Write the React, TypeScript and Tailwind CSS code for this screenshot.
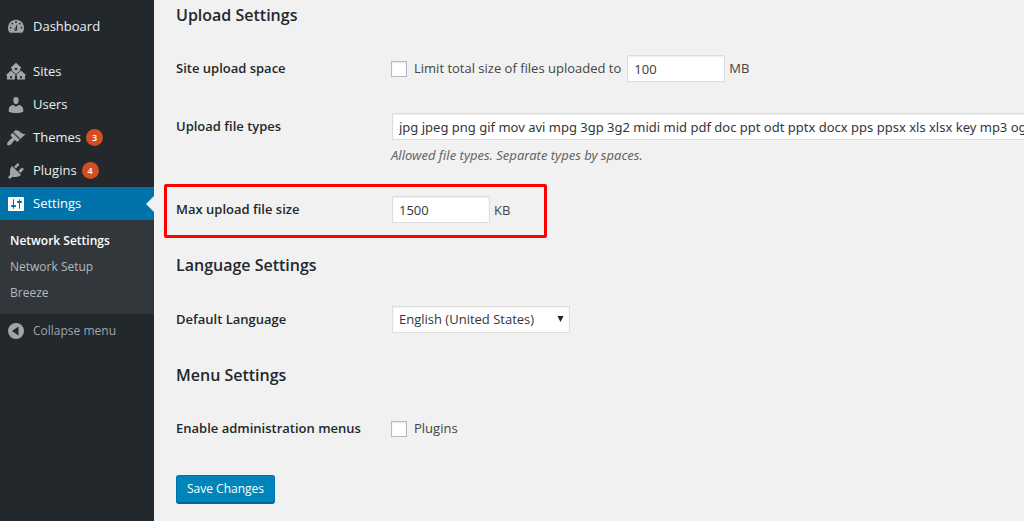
import type { ReactNode } from 'react';

function Icon({ d, children }: { d?: string; children?: ReactNode }) {
  return (
    <svg viewBox="0 0 20 20" className="size-5 shrink-0 fill-current" fillRule="evenodd" aria-hidden="true">
      {d && <path d={d} />}
      {children}
    </svg>
  );
}

const paths = {
  dashboard:
    'M3.76 15.8h12.48c1.1-1.37 1.76-3.11 1.76-5 0-4.42-3.58-8-8-8s-8 3.58-8 8c0 1.89.66 3.63 1.76 5z',
  sites:
    'M10 .8l5.4 4.9-.9 1H14v2L10.1 12h-.2L6 8.700V6.700h-.5l-.9-1zM8.900 6v2h2.200V6zM5 8.400l4.900 4.500-.7.900H9V17.500H1v-3.700H.8L0 12.900zM4 14.300v2h2v-2zM15 8.400l5 4.500-.8.900H19v3.700h-8v-3.700h-.2l-.7-.9zM14 14.300v2h2v-2z',
  users:
    'M10 9.25c-2.27 0-2.73-3.44-2.73-3.44C7 4.02 7.82 2 9.97 2c2.16 0 2.98 2.02 2.71 3.81 0 0-.41 3.44-2.68 3.44zm0 2.57L12.72 10c2.39 0 4.52 2.33 4.52 4.53v2.49s-3.65 1.13-7.24 1.13c-3.65 0-7.24-1.13-7.24-1.13v-2.49c0-2.25 1.94-4.48 4.47-4.48z',
  themes:
    'M14.48 11.06L7.41 3.99l1.5-1.5c.5-.56 2.3-.47 3.51.32 1.21.8 1.43 1.28 2.91 2.1 1.18.64 2.45 1.26 4.45.85zm-.71.71L6.7 4.7 4.93 6.47c-.39.39-.39 1.02 0 1.41l1.06 1.06c.39.39.39 1.03 0 1.42-.6.6-1.43 1.11-2.21 1.69-.35.26-.7.53-1.01.84C1.43 14.23.4 16.08 1.4 17.07c.99 1 2.84-.03 4.18-1.36.31-.31.58-.66.85-1.02.57-.78 1.08-1.61 1.69-2.21.39-.39 1.02-.39 1.41 0l1.06 1.06c.39.39 1.02.39 1.41 0z',
  plugins:
    'M13.11 4.36L9.87 7.6 8 5.73l3.24-3.24c.35-.34 1.05-.2 1.56.32.52.51.66 1.21.31 1.55zm-8 1.77l.91-1.12 9.01 9.01-1.19.84c-.71.71-2.63 1.16-3.82 1.16H6.14L4.9 17.26c-.59.59-1.54.59-2.12 0-.59-.58-.59-1.53 0-2.12l1.24-1.24v-3.88c0-1.13.4-3.19 1.09-3.89zm7.26 3.97l3.24-3.24c.34-.35 1.04-.21 1.55.31.52.51.66 1.21.31 1.55l-3.24 3.25z',
  settings:
    'M18 16V4c0-.55-.45-1-1-1H3c-.55 0-1 .45-1 1v12c0 .55.45 1 1 1h14c.55 0 1-.45 1-1zM8 11h1c.55 0 1 .45 1 1s-.45 1-1 1H8v1.5c0 .28-.22.5-.5.5s-.5-.22-.5-.5V13H6c-.55 0-1-.45-1-1s.45-1 1-1h1V5.5c0-.28.22-.5.5-.5s.5.22.5.5V11zm5-2h-1c-.55 0-1-.45-1-1s.45-1 1-1h1V5.5c0-.28.22-.5.5-.5s.5.22.5.5V7h1c.55 0 1 .45 1 1s-.45 1-1 1h-1v5.5c0 .28-.22.5-.5.5s-.5-.22-.5-.5V9z',
  collapse: 'M10 2a8 8 0 1 0 0 16 8 8 0 0 0 0-16zM12.5 5.5v9L6 10z',
};

function MenuItem({ icon, label, count }: { icon: ReactNode; label: string; count?: number }) {
  return (
    <a href="#" className="flex h-[33px] items-center gap-[7px] pl-1.5 text-[#eee]">
      <span className="text-[#a0a5aa]">{icon}</span>
      {label}
      {count !== undefined && (
        <span className="-ml-0.5 flex size-[17px] items-center justify-center rounded-full bg-[#d54e21] text-[9px] font-semibold text-white">
          {count}
        </span>
      )}
    </a>
  );
}

function Sidebar() {
  return (
    <nav className="w-[154px] shrink-0 bg-[#23282d] pt-2.5 text-[13px]">
      <MenuItem
        label="Dashboard"
        icon={
          <Icon d={paths.dashboard}>
            <g className="fill-[#23282d]">
              <circle cx="10" cy="5" r=".9" />
              <circle cx="6.2" cy="6.6" r=".9" />
              <circle cx="13.8" cy="6.6" r=".9" />
              <circle cx="4.6" cy="10.6" r=".9" />
              <circle cx="15.4" cy="10.6" r=".9" />
              <path d="M11.2 6.8l-.2 4.700a1.500 1.500 0 1 1-1.700-.5z" />
            </g>
            <circle cx="9.8" cy="12.3" r=".6" />
          </Icon>
        }
      />
      <div className="h-3" />
      <MenuItem label="Sites" icon={<Icon d={paths.sites} />} />
      <MenuItem label="Users" icon={<Icon d={paths.users} />} />
      <MenuItem label="Themes" count={3} icon={<Icon d={paths.themes} />} />
      <MenuItem label="Plugins" count={4} icon={<Icon d={paths.plugins} />} />
      <a
        href="#"
        aria-current="page"
        className="flex h-[33px] items-center justify-between bg-[#0073aa] pl-1.5 text-white"
      >
        <span className="flex items-center gap-[7px]">
          <Icon d={paths.settings} />
          Settings
        </span>
        <span className="border-y-8 border-r-8 border-y-transparent border-r-[#f1f1f1]" />
      </a>
      <div className="flex flex-col bg-[#32373c] px-2.5 py-2 text-[12px] leading-[26px] text-[#b4b9be]">
        <a href="#" className="font-semibold text-white">Network Settings</a>
        <a href="#">Network Setup</a>
        <a href="#">Breeze</a>
      </div>
      <button type="button" className="flex h-[33px] items-center gap-[7px] pl-1.5 text-[12px] text-[#a0a5aa]">
        <Icon d={paths.collapse} />
        Collapse menu
      </button>
    </nav>
  );
}

const field = 'h-[27px] border border-[#ddd] bg-white px-1.5 text-[13px] text-[#32373c] shadow-[inset_0_1px_2px_rgba(0,0,0,0.07)]';
const checkbox = 'size-4 shrink-0 appearance-none border border-[#b4b9be] bg-white shadow-[inset_0_1px_2px_rgba(0,0,0,0.1)]';

function Heading({ children }: { children: ReactNode }) {
  return <h2 className="text-[16px] leading-6 font-semibold text-[#23282d]">{children}</h2>;
}

function Row({ label, htmlFor, children }: { label: string; htmlFor: string; children: ReactNode }) {
  return (
    <div className="flex items-start">
      <label htmlFor={htmlFor} className="w-[215px] shrink-0 text-[13px] leading-[27px] font-semibold text-[#23282d]">
        {label}
      </label>
      <div className="min-w-0 flex-1">{children}</div>
    </div>
  );
}

export default function App() {
  return (
    <div className="flex min-h-screen bg-[#f1f1f1] font-['Open_Sans','Noto_Sans',sans-serif] text-[13px] text-[#444]">
      <Sidebar />
      <main className="min-w-0 flex-1 overflow-hidden pt-[3px] pl-[22px]">
        <form>
          <Heading>Upload Settings</Heading>
          <div className="flex flex-col gap-[31px] pt-7 pb-[30px]">
            <Row label="Site upload space" htmlFor="space">
              <div className="flex items-center">
                <label className="flex items-center gap-[7px]">
                  <input type="checkbox" className={checkbox} />
                  Limit total size of files uploaded to
                </label>
                <input id="space" defaultValue="100" className={`${field} ml-1.5 w-[98px]`} />
                <span className="ml-1">MB</span>
              </div>
            </Row>
            <Row label="Upload file types" htmlFor="types">
              <input
                id="types"
                defaultValue="jpg jpeg png gif mov avi mpg 3gp 3g2 midi mid pdf doc ppt odt pptx docx pps ppsx xls xlsx key mp3 ogg flac m4a wav mp4 m4v webm ogv flv"
                className={`${field} ml-px block w-[115%] font-['Noto_Sans',sans-serif]`}
              />
              <p className="mt-[5px] font-['Noto_Sans',sans-serif] leading-5 text-[#666] italic">
                Allowed file types. Separate types by spaces.
              </p>
            </Row>
            <div className="relative">
              <Row label="Max upload file size" htmlFor="max">
                <input id="max" defaultValue="1500" className={`${field} ml-px w-[98px]`} />
                <span className="ml-1">KB</span>
              </Row>
              <div className="pointer-events-none absolute -top-3 -left-3 h-[54px] w-[383px] rounded-xs border-3 border-[#fe0000]" />
            </div>
          </div>
          <Heading>Language Settings</Heading>
          <div className="pt-[29px] pb-[30px]">
            <Row label="Default Language" htmlFor="language">
              <div className="relative ml-px w-[178px]">
                <select id="language" className={`${field} w-full appearance-none`}>
                  <option>English (United States)</option>
                </select>
                <svg viewBox="0 0 7 6" className="pointer-events-none absolute top-2.5 right-1.5 h-1.5 w-[7px] fill-[#222]" aria-hidden="true">
                  <path d="M.5 0h6L3.500 6z" />
                </svg>
              </div>
            </Row>
          </div>
          <Heading>Menu Settings</Heading>
          <div className="pt-7 pb-[33px]">
            <Row label="Enable administration menus" htmlFor="plugins">
              <label className="flex h-[27px] items-center gap-[7px]">
                <input id="plugins" type="checkbox" className={checkbox} />
                Plugins
              </label>
            </Row>
          </div>
          <button
            type="submit"
            className="h-7 rounded-[3px] border border-[#0073aa] border-b-[#006799] bg-[#0085ba] px-2.5 text-[12px] text-white shadow-[0_1px_0_#006799]"
          >
            Save Changes
          </button>
        </form>
      </main>
    </div>
  );
}
